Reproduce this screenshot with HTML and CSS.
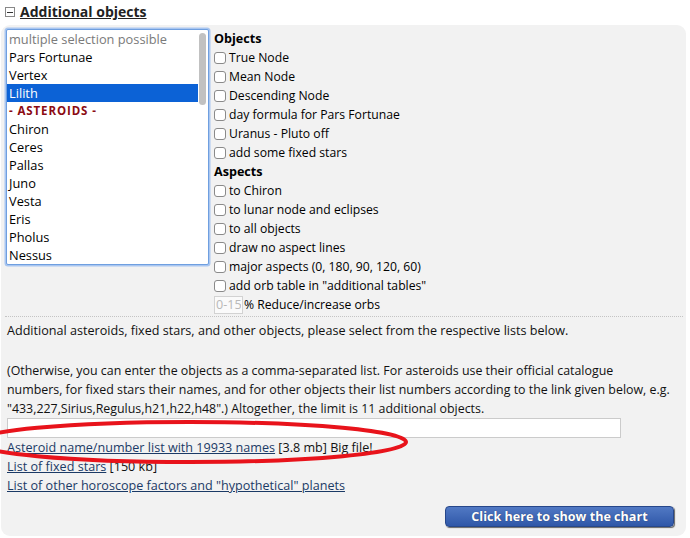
FILE: index.html
```html
<!DOCTYPE html>
<html>
<head>
<meta charset="utf-8">
<link rel="stylesheet" href="styles.css">
</head>
<body>
<div class="page">
  <div class="header">
    <span class="toggle"><span class="toggle-bar"></span></span>
    <span class="header-title">Additional objects</span>
  </div>
  <div class="panel">
    <div class="top">
      <div class="listbox">
        <div class="options">
          <div class="opt placeholder">multiple selection possible</div>
          <div class="opt">Pars Fortunae</div>
          <div class="opt">Vertex</div>
          <div class="opt selected">Lilith</div>
          <div class="opt group">- ASTEROIDS -</div>
          <div class="opt">Chiron</div>
          <div class="opt">Ceres</div>
          <div class="opt">Pallas</div>
          <div class="opt">Juno</div>
          <div class="opt">Vesta</div>
          <div class="opt">Eris</div>
          <div class="opt">Pholus</div>
          <div class="opt">Nessus</div>
        </div>
        <div class="scroll"><div class="thumb"></div></div>
      </div>
      <div class="options-col">
        <div class="col-title">Objects</div>
        <label class="row"><span class="cb"></span>True Node</label>
        <label class="row"><span class="cb"></span>Mean Node</label>
        <label class="row"><span class="cb"></span>Descending Node</label>
        <label class="row"><span class="cb"></span>day formula for Pars Fortunae</label>
        <label class="row"><span class="cb"></span>Uranus - Pluto off</label>
        <label class="row"><span class="cb"></span>add some fixed stars</label>
        <div class="col-title">Aspects</div>
        <label class="row"><span class="cb"></span>to Chiron</label>
        <label class="row"><span class="cb"></span>to lunar node and eclipses</label>
        <label class="row"><span class="cb"></span>to all objects</label>
        <label class="row"><span class="cb"></span>draw no aspect lines</label>
        <label class="row"><span class="cb"></span>major aspects (0, 180, 90, 120, 60)</label>
        <label class="row"><span class="cb"></span>add orb table in "additional tables"</label>
        <div class="row orb"><input class="orb-input" type="text" placeholder="0-150">% Reduce/increase orbs</div>
      </div>
    </div>
    <div class="info">
      <p class="p1">Additional asteroids, fixed stars, and other objects, please select from the respective lists below.</p>
      <p class="p2">(Otherwise, you can enter the objects as a comma-separated list. For asteroids use their official catalogue<br>numbers, for fixed stars their names, and for other objects their list numbers according to the link given below, e.g.<br>"433,227,Sirius,Regulus,h21,h22,h48".) Altogether, the limit is 11 additional objects.</p>
      <input class="list-input" type="text">
      <div class="links">
        <div><a href="#">Asteroid name/number list with 19933 names</a> [3.8 mb] Big file!</div>
        <div><a href="#">List of fixed stars</a> [150 kb]</div>
        <div><a href="#">List of other horoscope factors and "hypothetical" planets</a></div>
      </div>
    </div>
    <div class="actions">
      <button class="submit" type="button">Click here to show the chart</button>
    </div>
  </div>
  <svg class="mark" width="690" height="538" viewBox="0 0 690 538">
    <ellipse cx="190" cy="442" rx="216" ry="20" fill="none" stroke="#e8131b" stroke-width="4"/>
  </svg>
</div>
</body>
</html>
```
FILE: styles.css
```css
* { box-sizing: border-box; }
html, body { margin: 0; padding: 0; background: #fff; }
body {
  font-family: "Open Sans", "DejaVu Sans", sans-serif;
  font-size: 12.6px;
  line-height: 19px;
  color: #111;
  width: 690px;
  height: 538px;
  overflow: hidden;
}
.page { position: relative; width: 690px; height: 538px; }

.header {
  height: 25px;
  display: flex;
  align-items: center;
  padding-left: 5px;
  padding-bottom: 1px;
}
.toggle {
  width: 10px;
  height: 10px;
  border: 1px solid #888;
  background: #fff;
  display: flex;
  align-items: center;
  justify-content: center;
  margin-right: 5px;
}
.toggle-bar { width: 6px; height: 1px; background: #333; }
.header-title {
  font-size: 14px;
  font-weight: 700;
  color: #222;
  text-decoration: underline;
  line-height: 20px;
}

.panel {
  margin-left: 1px;
  width: 685px;
  height: 511px;
  background: #f2f2f2;
  border-radius: 9px;
  padding: 4px 3px 0 4px;
}
.top {
  display: flex;
  align-items: flex-start;
  border-bottom: 1px dotted #c4c4c4;
  padding-bottom: 1px;
}
.listbox {
  width: 203px;
  height: 236px;
  background: #fff;
  border: 1px solid #6f9fe0;
  box-shadow: 0 0 0 1.5px #a9c6f0;
  border-radius: 2px;
  display: flex;
  margin-left: 1px;
  margin-right: 5px;
  font-size: 12.8px;
}
.options { flex: 1; }
.opt {
  height: 18px;
  line-height: 18px;
  padding-left: 2px;
  color: #000;
  white-space: nowrap;
}
.opt.placeholder { color: #7a7a7a; }
.opt.selected { background: #0c62d6; color: #fff; }
.opt.group {
  color: #8b0a12;
  font-weight: 700;
  font-size: 11.5px;
  letter-spacing: 0.9px;
  padding-left: 2px;
}
.scroll { width: 10px; padding: 3px 1px 0 1px; }
.thumb { width: 7px; height: 72px; background: #c1c1c1; border-radius: 4px; }

.options-col { display: flex; flex-direction: column; font-size: 12.2px; }
.col-title { font-weight: 700; line-height: 19px; color: #000; font-size: 12.6px; }
.row {
  display: flex;
  align-items: center;
  height: 19px;
  color: #000;
  white-space: nowrap;
}
.cb {
  width: 12px;
  height: 12px;
  border: 1px solid #8a8a8a;
  border-radius: 3px;
  background: #fff;
  margin-right: 3px;
}
.orb { height: 20px; padding-bottom: 1px; }
.orb-input {
  width: 29px;
  height: 18px;
  border: 1px solid #d2d2d2;
  background: #fafafa;
  padding: 0 1px;
  font-family: inherit;
  font-size: 12.6px;
  margin: 0 1px 0 0;
}
.orb-input::placeholder { color: #b8b8b8; }

.info { padding-left: 2px; padding-top: 4px; }
.info p { margin: 0; }
.p1 { margin-bottom: 21px !important; }
.p2 { white-space: nowrap; font-size: 12.4px; }
.list-input {
  display: block;
  width: 614px;
  height: 20px;
  margin: 0;
  border: 1px solid #cbcbcb;
  background: #fff;
  font-family: inherit;
}
.links a { color: #1b3a66; text-decoration: underline; }

.actions {
  display: flex;
  justify-content: flex-end;
  padding-right: 9px;
  margin-top: 11px;
}
.submit {
  width: 229px;
  height: 21px;
  border: 1px solid #27478a;
  border-radius: 4px;
  background: linear-gradient(#5179c4, #2f57a8);
  color: #fff;
  font-family: "Open Sans", sans-serif;
  font-weight: 700;
  font-size: 12.6px;
  line-height: 17px;
  padding: 0;
  text-shadow: 0 0 1px rgba(0,0,0,0.5);
  box-shadow: 1px 1px 1px #666;
}

.mark { position: absolute; left: 0; top: 0; pointer-events: none; }
```
